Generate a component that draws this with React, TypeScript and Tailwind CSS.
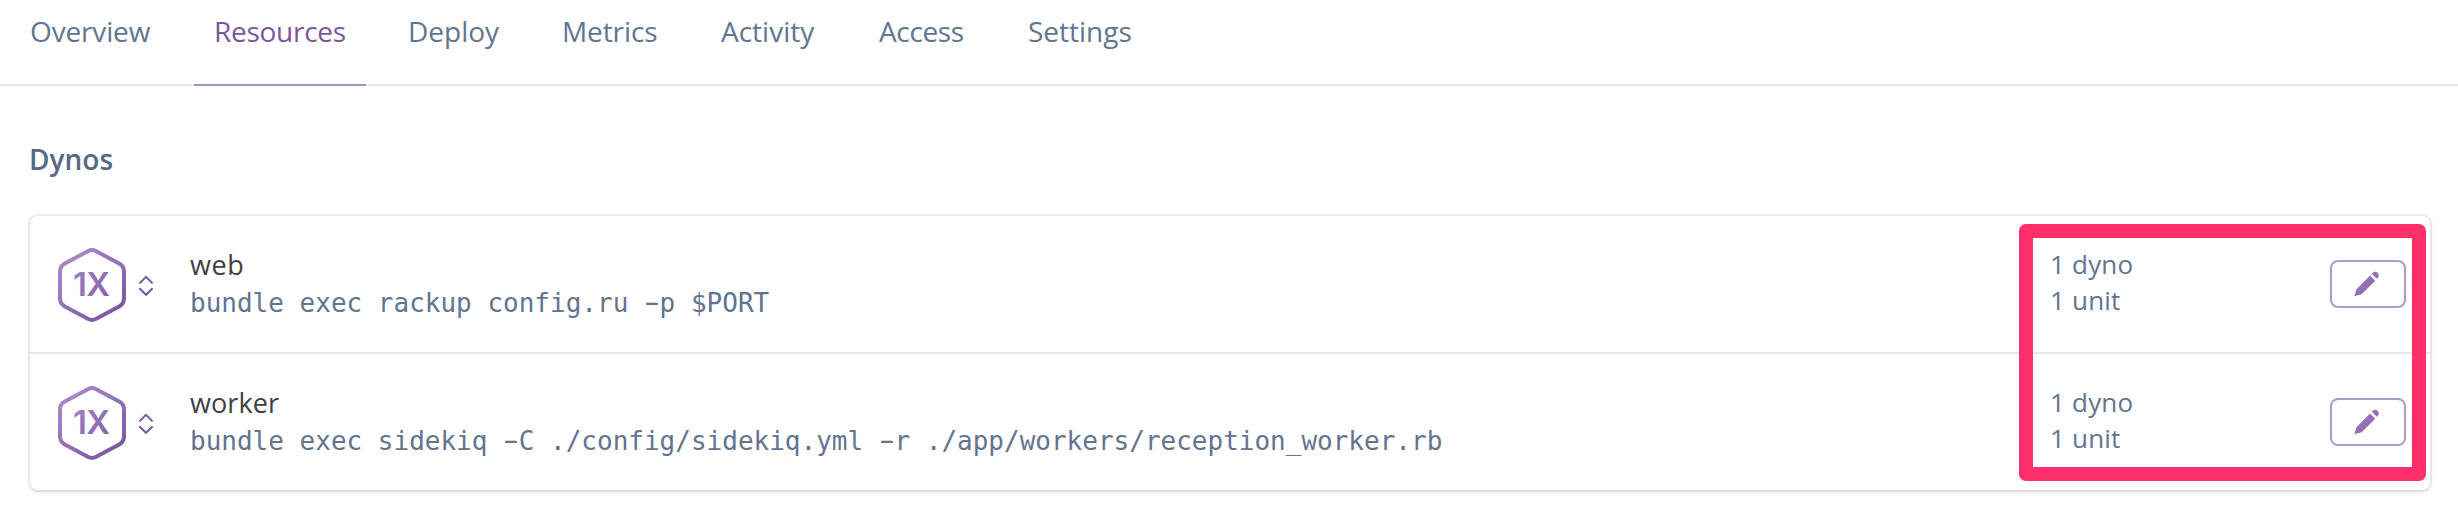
const OPEN = "font-['Open_Sans',sans-serif]";

type Tab = { label: string; box: string; active?: boolean };
const tabs: Tab[] = [
  { label: "Overview", box: "w-[162px] pl-[20px] tracking-[-0.15px]" },
  { label: "Resources", box: "w-[172px] pl-[20px] tracking-[-0.28px]", active: true },
  { label: "Deploy", box: "w-[132px] pl-[20px]" },
  { label: "Metrics", box: "w-[138px] pl-[20px] tracking-[-0.1px]" },
  { label: "Activity", box: "w-[136px] pl-[19px]" },
  { label: "Access", box: "w-[127px] pl-[19px] tracking-[-0.35px]" },
  { label: "Settings", box: "w-[146px] pl-[19px]" },
];

const dynos = [
  { name: "web", tracking: "tracking-[0.6px]", command: "bundle exec rackup config.ru -p $PORT" },
  { name: "worker", tracking: "tracking-[0.1px]", command: "bundle exec sidekiq -C ./config/sidekiq.yml -r ./app/workers/reception_worker.rb" },
];

function Command({ text }: { text: string }) {
  const parts = text.split("-");
  return (
    <div className="whitespace-pre font-['DejaVu_Sans_Mono',monospace] text-[26px] leading-[36px] text-[#62748f]">
      {parts.map((part, i) => (
        <span key={i}>
          {i > 0 && <span className="inline-block -translate-y-px scale-x-[1.75]">-</span>}
          {part}
        </span>
      ))}
    </div>
  );
}

function DynoBadge({ id }: { id: string }) {
  return (
    <svg className="mt-0.5 h-[74px] w-[68px] shrink-0" viewBox="0 0 68 74" fill="none">
      <defs>
        <linearGradient id={id} x1="6" y1="8" x2="60" y2="68" gradientUnits="userSpaceOnUse">
          <stop stopColor="#a98bcb" />
          <stop offset="1" stopColor="#7a569f" />
        </linearGradient>
      </defs>
      <path
        d="M29.8 3.2Q34 .9 38.2 3.2L61.6 15.8Q66 18.4 66 23.4V50.6Q66 55.6 61.6 58.2L38.2 70.8Q34 73.1 29.8 70.8L6.4 58.2Q2 55.6 2 50.6V23.4Q2 18.4 6.4 15.8Z"
        stroke={`url(#${id})`}
        strokeWidth="4"
      />
      <text x="33.6" y="48" textAnchor="middle" className="font-['Inter',sans-serif] text-[33px] font-semibold" textLength="37" fill={`url(#${id})`}>
        1X
      </text>
    </svg>
  );
}

function Chevrons() {
  return (
    <svg className="ml-3 mt-1 h-[22px] w-4 shrink-0" viewBox="0 0 16 22" fill="none" stroke="#79589f" strokeWidth="2">
      <path d="M1.4 8.4 8 1.8l6.6 6.6M1.4 13.2 8 19.8l6.6-6.6" />
    </svg>
  );
}

function Pencil({ id }: { id: string }) {
  return (
    <svg className="mr-0.5 h-[26px] w-[26px]" viewBox="0 0 26 26">
      <defs>
        <linearGradient id={id} x1="0" y1="0" x2="26" y2="26" gradientUnits="userSpaceOnUse">
          <stop stopColor="#9f80c3" />
          <stop offset="1" stopColor="#8660ac" />
        </linearGradient>
      </defs>
      <path fill={`url(#${id})`} d="M.4 25.2 2.4 18.2 16 4.6 21.2 9.8 7.6 23.2ZM17.8 2.8 19 1.6Q21.4-.4 23.6 1.8 25.8 4 24 6.6L22.8 7.8Z" />
    </svg>
  );
}

export default function App() {
  return (
    <div className={`relative h-[518px] w-[2458px] overflow-hidden bg-white ${OPEN}`}>
      <nav className="flex h-[86px] gap-[22px] border-b-2 border-[#e6e9f4] pl-[10px]">
        {tabs.map((t) => (
          <a
            key={t.label}
            className={`-mb-0.5 h-[86px] whitespace-nowrap border-b-2 pt-[11px] text-[28px] leading-[40px] ${t.box} ${t.active ? "border-[#aa92c4] text-[#79589f]" : "border-transparent text-[#62748f]"}`}
          >
            {t.label}
          </a>
        ))}
      </nav>

      <h2 className="ml-[29px] mt-[53px] text-[28px] font-semibold leading-[40px] text-[#596981]">Dynos</h2>

      <section className="ml-7 mt-[35px] flex h-[278px] w-[2404px] flex-col divide-y-2 divide-[#e4e8f4] rounded-[10px] border-2 border-x-[#e6e8ee] border-b-[#dcdfe6] border-t-[#e9ebed] shadow-[0_2px_4px_rgba(0,0,0,0.05)]">
        {dynos.map((d) => (
          <div key={d.name} className="box-content flex h-[136px] items-center pl-7 pr-6">
            <DynoBadge id={`hex-${d.name}`} />
            <Chevrons />
            <div className="ml-9 flex-1">
              <div className={`-mt-px mb-px text-[27px] leading-[38px] text-[#3f3f44] ${d.tracking}`}>{d.name}</div>
              <Command text={d.command} />
            </div>
            <div className="-mt-1 w-[280px] text-[26px] leading-[36px] tracking-[0.2px] text-[#62748f]">
              <div>1 dyno</div>
              <div>1 unit</div>
            </div>
            <button className="flex h-12 w-[76px] items-center justify-center rounded-lg border-2 border-[#b29bcb]">
              <Pencil id={`pen-${d.name}`} />
            </button>
          </div>
        ))}
      </section>

      <div className="absolute left-[2018.6px] top-[224px] h-[257px] w-[407.4px] rounded-[7px] border-[14px] border-[#ff2f6b]" />
    </div>
  );
}
